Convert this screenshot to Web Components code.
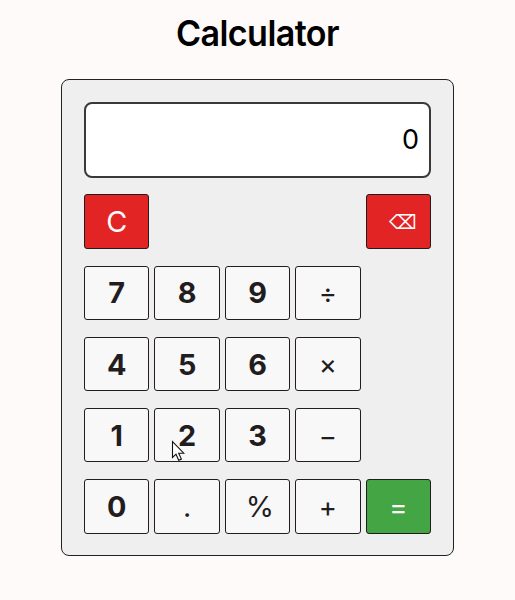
<!DOCTYPE html>
<html lang="en"><head><meta charset="utf-8"><title>Calculator</title>
<style>body{margin:0;background:#fffafa;font-family:Inter,"Liberation Sans",sans-serif;color:#000}</style></head>
<body><calc-app></calc-app>
<script>
class CalcKey extends HTMLElement{
 constructor(){super();this.attachShadow({mode:'open'}).innerHTML=`<style>
 :host{display:flex;box-sizing:border-box;align-items:center;justify-content:center;height:54.25px;border:1px solid #231c1e;border-radius:3px;background:#f8f8f8;color:#231c1e;font-size:28.8px;line-height:1;padding-top:2px}
 :host([kind=num]){font-weight:700}
 :host([kind=op]),:host([kind=eq]){font-size:27.5px}
 :host([kind=red]){background:#e32424;color:#fff}
 :host([kind=eq]){background:#43a543;color:#fff}
 </style><slot></slot>`}}
customElements.define('calc-key',CalcKey);
class CalcDisplay extends HTMLElement{
 constructor(){super();this.attachShadow({mode:'open'}).innerHTML=`<style>
 :host{display:flex;box-sizing:border-box;height:76px;border:2px solid #3b383a;border-radius:8px;background:#fff;align-items:center;justify-content:flex-end;padding:0 10px 2px;font-size:27px}
 </style><slot></slot>`}}
customElements.define('calc-display',CalcDisplay);
class MousePointer extends HTMLElement{
 constructor(){super();this.attachShadow({mode:'open'}).innerHTML=`<style>
 :host{position:absolute;left:171px;top:440px;width:14px;height:22px}svg{display:block}
 </style><svg width="14" height="22" viewBox="0 0 14 22"><path d="M1.5 1.5V17.5L5 14.2L7.7 20.3L10.4 19.1L7.7 13.2H12.8Z" fill="#fff" stroke="#111" stroke-width="1.1"/></svg>`}}
customElements.define('mouse-pointer',MousePointer);
class CalcApp extends HTMLElement{
 constructor(){super();this.attachShadow({mode:'open'}).innerHTML=`<style>
 :host{display:block}
 h1{margin:0;padding-top:12px;height:67px;font-size:35.5px;line-height:43px;text-align:center;font-weight:600;letter-spacing:-.6px;transform:scaleX(.96)}
 section{box-sizing:border-box;width:393px;height:477px;margin:0 auto;border:1px solid #222;border-radius:8px;background:#efefef;padding:22px}
 .keys{margin-top:16.4px;display:grid;grid-template-columns:repeat(5,65.4px);column-gap:5px;row-gap:17px}
 .last{grid-column:5;font-family:"DejaVu Sans",sans-serif;font-size:19.5px;padding-left:9px}
 .pct{padding-left:5px}
 </style><h1>Calculator</h1><section><calc-display>0</calc-display><div class="keys">
 <calc-key kind="red">C</calc-key><calc-key kind="red" class="last">⌫</calc-key>
 <calc-key kind="num">7</calc-key><calc-key kind="num">8</calc-key><calc-key kind="num">9</calc-key><calc-key kind="op">÷</calc-key><i></i>
 <calc-key kind="num">4</calc-key><calc-key kind="num">5</calc-key><calc-key kind="num">6</calc-key><calc-key kind="op">×</calc-key><i></i>
 <calc-key kind="num">1</calc-key><calc-key kind="num">2</calc-key><calc-key kind="num">3</calc-key><calc-key kind="op">−</calc-key><i></i>
 <calc-key kind="num">0</calc-key><calc-key>.</calc-key><calc-key class="pct">%</calc-key><calc-key kind="op">+</calc-key><calc-key kind="eq">=</calc-key></div></section><mouse-pointer></mouse-pointer>`}}
customElements.define('calc-app',CalcApp);
</script></body></html>
